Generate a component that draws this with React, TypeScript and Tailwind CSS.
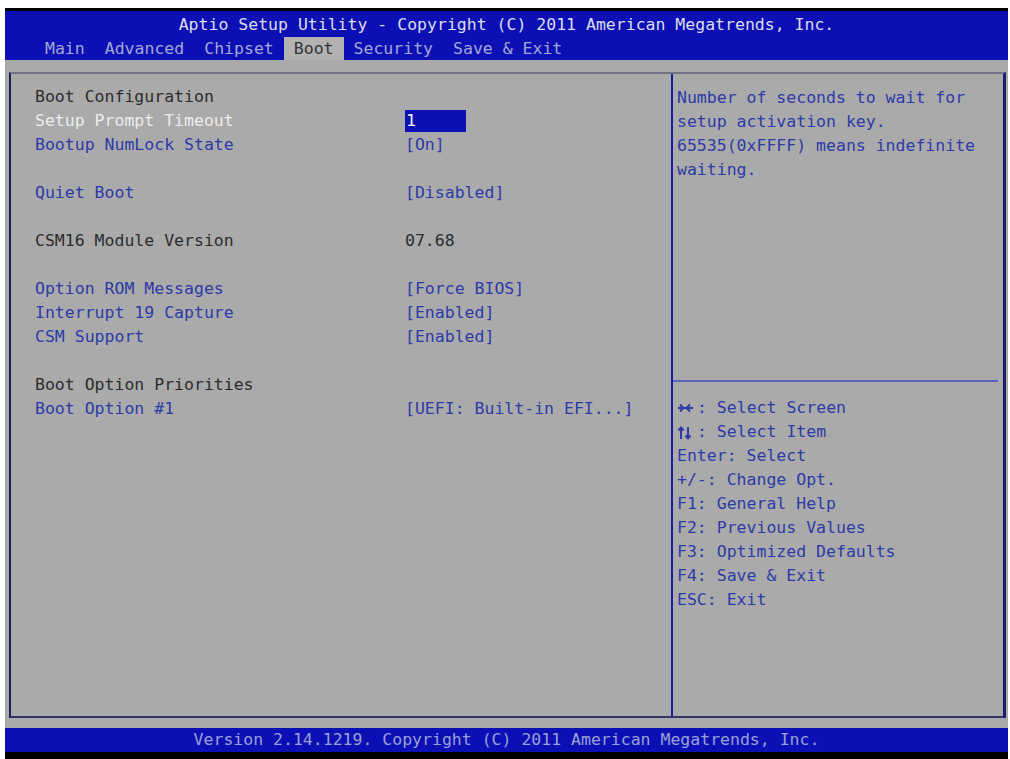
const tabs = ['Main', 'Advanced', 'Chipset', 'Boot', 'Security', 'Save & Exit'];
const activeTab = 'Boot';

type Row =
  | { kind: 'heading'; label: string }
  | { kind: 'info'; label: string; value: string }
  | { kind: 'option'; label: string; value: string; selected?: boolean }
  | { kind: 'gap' };

const rows: Row[] = [
  { kind: 'heading', label: 'Boot Configuration' },
  { kind: 'option', label: 'Setup Prompt Timeout', value: '1', selected: true },
  { kind: 'option', label: 'Bootup NumLock State', value: '[On]' },
  { kind: 'gap' },
  { kind: 'option', label: 'Quiet Boot', value: '[Disabled]' },
  { kind: 'gap' },
  { kind: 'info', label: 'CSM16 Module Version', value: '07.68' },
  { kind: 'gap' },
  { kind: 'option', label: 'Option ROM Messages', value: '[Force BIOS]' },
  { kind: 'option', label: 'Interrupt 19 Capture', value: '[Enabled]' },
  { kind: 'option', label: 'CSM Support', value: '[Enabled]' },
  { kind: 'gap' },
  { kind: 'heading', label: 'Boot Option Priorities' },
  { kind: 'option', label: 'Boot Option #1', value: '[UEFI: Built-in EFI...]' },
];

const helpLines = [
  'Number of seconds to wait for',
  'setup activation key.',
  '65535(0xFFFF) means indefinite',
  'waiting.',
];

const keyLines = [
  'Enter: Select',
  '+/-: Change Opt.',
  'F1: General Help',
  'F2: Previous Values',
  'F3: Optimized Defaults',
  'F4: Save & Exit',
  'ESC: Exit',
];

function SetupRow({ row }: { row: Row }) {
  if (row.kind === 'gap') return <div className="h-[24px]" />;

  if (row.kind === 'heading') {
    return <div className="h-[24px] leading-[24px] text-[#2c2c2c]">{row.label}</div>;
  }

  const labelColor =
    row.kind === 'info' ? 'text-[#2c2c2c]' : row.selected ? 'text-[#ececec]' : 'text-[#2c3ba8]';
  const valueColor = row.kind === 'info' ? 'text-[#2c2c2c]' : 'text-[#2c3ba8]';

  return (
    <div className="flex h-[24px] leading-[24px]">
      <div className={`w-[370px] ${labelColor}`}>{row.label}</div>
      {row.kind === 'option' && row.selected ? (
        <div className="my-[1px] w-[61px] bg-[#0c10b4] pl-[1px] leading-[22px] text-[#f2f2f2]">
          {row.value}
        </div>
      ) : (
        <div className={valueColor}>{row.value}</div>
      )}
    </div>
  );
}

// left/right arrows packed into two character cells
function LeftRightGlyph() {
  return (
    <svg width="20" height="24" viewBox="0 0 20 24" className="shrink-0">
      <g stroke="#2c3ba8" strokeWidth="2" fill="none">
        <path d="M1 12h15" />
        <path d="M3 8.5l3.5 3.5L3 15.5" />
        <path d="M13 8.5L9.5 12l3.5 3.5" />
      </g>
    </svg>
  );
}

// up/down arrows packed into two character cells
function UpDownGlyph() {
  return (
    <svg width="20" height="24" viewBox="0 0 20 24" className="shrink-0">
      <g stroke="#2c3ba8" strokeWidth="2" fill="none">
        <path d="M4 19V8M1.5 10.5L4 7.5l2.5 3" />
        <path d="M11 7v11M8.5 15.5l2.5 3 2.5-3" />
      </g>
    </svg>
  );
}

export default function App() {
  return (
    <div
      className="flex h-[759px] w-[1010px] flex-col overflow-hidden bg-white pt-[8px] pl-[5px] pr-[2px] text-[16.5px]"
      style={{ fontFamily: '"DejaVu Sans Mono", "Liberation Mono", monospace' }}
    >
      <div className="flex flex-1 flex-col border-t-[3px] border-black bg-[#aaaaaa]">
        {/* header: title + tab strip */}
        <div className="flex h-[49px] flex-col bg-[#0c10b4]">
          <div className="h-[26px] pt-[3px] text-center leading-[22px] text-[#dcdcee]">
            Aptio Setup Utility - Copyright (C) 2011 American Megatrends, Inc.
          </div>
          <div className="flex h-[23px] pl-[30px]">
            {tabs.map((tab) => (
              <div
                key={tab}
                className={`px-[10px] leading-[23px] ${
                  tab === activeTab ? 'bg-[#b2b2b2] text-[#333333]' : 'text-[#a2a7d6]'
                }`}
              >
                {tab}
              </div>
            ))}
          </div>
        </div>

        {/* main panel */}
        <div className="mt-[12px] ml-[4px] mr-[2px] flex h-[646px] border-y-2 border-l-2 border-r-[3px] border-t-[#727288] border-b-[#30306a] border-l-[#1c1c5e] border-r-[#1c1c70]">
          <div className="w-[660px] pt-[11px] pl-[24px]">
            {rows.map((row, i) => (
              <SetupRow key={i} row={row} />
            ))}
          </div>

          <div className="flex flex-1 flex-col border-l-2 border-[#1a1aa6]">
            <div className="h-[306px] pt-[12px] pl-[4px] text-[#2c3ba8]">
              {helpLines.map((line) => (
                <div key={line} className="h-[24px] leading-[24px]">
                  {line}
                </div>
              ))}
            </div>
            <div className="mr-[5px] h-[2px] bg-[#5c64bc]" />
            <div className="pt-[14px] pl-[4px] text-[#2c3ba8]">
              <div className="flex h-[24px] leading-[24px]">
                <LeftRightGlyph />
                <span>: Select Screen</span>
              </div>
              <div className="flex h-[24px] leading-[24px]">
                <UpDownGlyph />
                <span>: Select Item</span>
              </div>
              {keyLines.map((line) => (
                <div key={line} className="h-[24px] leading-[24px]">
                  {line}
                </div>
              ))}
            </div>
          </div>
        </div>

        {/* footer */}
        <div className="mt-[10px] h-[24px] bg-[#0c10b4] text-center leading-[24px] text-[#9aa0d6]">
          Version 2.14.1219. Copyright (C) 2011 American Megatrends, Inc.
        </div>
        <div className="h-[7px] bg-black" />
      </div>
    </div>
  );
}
